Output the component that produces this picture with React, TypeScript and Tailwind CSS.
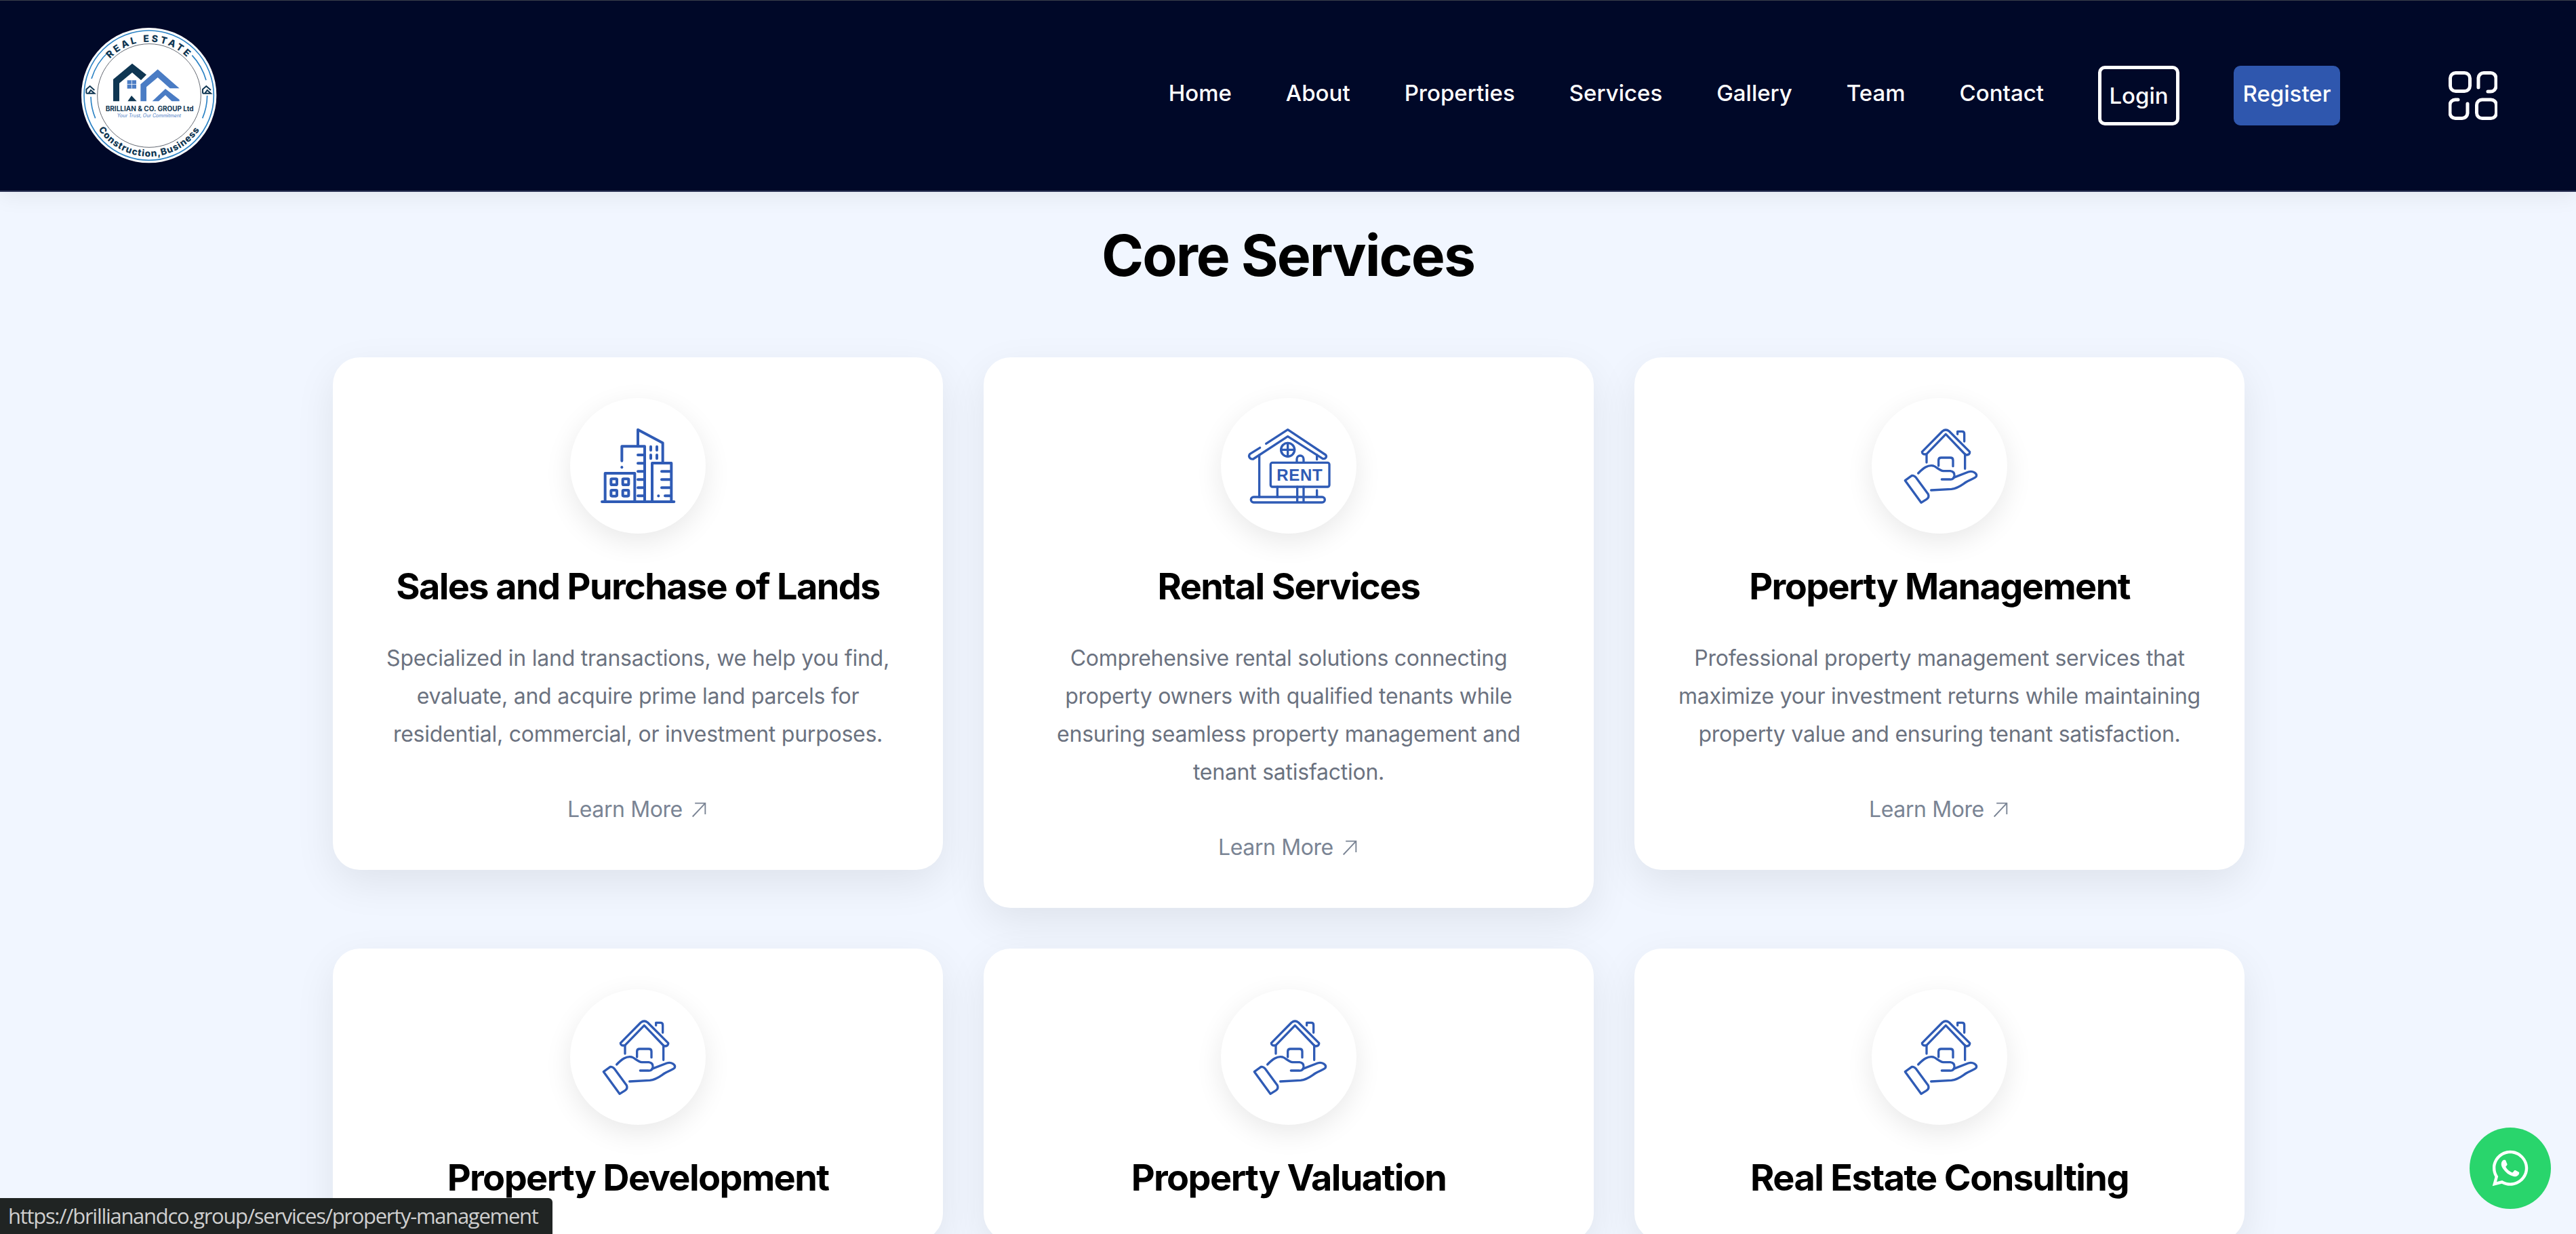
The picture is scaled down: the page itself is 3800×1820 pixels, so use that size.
import React from "react";
import { FaWhatsapp } from "react-icons/fa";

const navLinks = ["Home", "About", "Properties", "Services", "Gallery", "Team", "Contact"];

const Logo = () => (
  <svg viewBox="0 0 600 600" className="w-[200px] h-[200px] shrink-0">
    <defs>
      <path id="logoTop" d="M62 300 A238 238 0 0 1 538 300" />
      <path id="logoBottom" d="M30 300 A270 270 0 0 0 570 300" />
    </defs>
    <circle cx="299" cy="299" r="299" fill="#ffffff" />
    <circle cx="299" cy="299" r="287" fill="none" stroke="#2b82c4" strokeWidth="5" />
    <path d="M45 225 A265 265 0 0 1 122 105" fill="none" stroke="#2b82c4" strokeWidth="5" />
    <path d="M490 122 A265 265 0 0 1 552 232" fill="none" stroke="#2b82c4" strokeWidth="5" />
    <path d="M42 305 A262 262 0 0 0 62 400" fill="none" stroke="#2b82c4" strokeWidth="5" />
    <path d="M557 300 A262 262 0 0 1 536 400" fill="none" stroke="#2b82c4" strokeWidth="5" />
    <circle cx="300" cy="300" r="229" fill="none" stroke="#444a55" strokeWidth="2.5" />
    <text fill="#0f3652" fontSize="42" fontWeight="800" fontFamily="Inter, sans-serif" letterSpacing="10">
      <textPath href="#logoTop" startOffset="50%" textAnchor="middle">REAL ESTATE</textPath>
    </text>
    <text fill="#0f3652" fontSize="41" fontWeight="800" fontFamily="Inter, sans-serif" letterSpacing="3">
      <textPath href="#logoBottom" startOffset="50%" textAnchor="middle">Construction,Business</textPath>
    </text>
    <path d="M22 290 V272 L38 258 L58 276 M22 290 H58 L42 276 L32 290" fill="none" stroke="#0f3652" strokeWidth="6" />
    <path d="M537 290 V272 L553 258 L573 276 M537 290 H573 L557 276 L547 290" fill="none" stroke="#0f3652" strokeWidth="6" />
    <path d="M141 325 V228 L225 158 L288 208 L264 232 L225 198 L168 245 V325 H205 L222 300 L245 325 Z" fill="#0f3652" />
    <rect x="203" y="232" width="40" height="37" fill="#4a7cc4" />
    <path d="M223 232 V269 M203 250 H243" stroke="#ffffff" strokeWidth="2.5" />
    <path d="M262 250 L338 184 L434 268 H392 L338 220 L288 262 V325 H262 Z" fill="#4a7cc4" />
    <path d="M314 325 L372 270 L434 318 V325 H400 L372 298 L342 325 Z" fill="#4a7cc4" />
    <text x="302" y="368" textAnchor="middle" fill="#0f3652" fontSize="30" fontWeight="700" fontFamily="Inter, sans-serif">BRILLIAN &amp; CO. GROUP Ltd</text>
    <text x="300" y="397" textAnchor="middle" fill="#4a7cc4" fontSize="21" fontStyle="italic" fontFamily="Inter, sans-serif">Your Trust, Our Commitment</text>
  </svg>
);

const MenuIcon = () => (
  <svg viewBox="0 0 72 72" fill="none" stroke="#ffffff" strokeWidth="5" strokeLinecap="round" className="w-[72px] h-[72px]">
    <rect x="2.5" y="2.5" width="29" height="27" rx="8" />
    <path d="M44 24 V10 a8 8 0 0 1 8 -7.500 h10 a8 8 0 0 1 8 7.500 V22 a8 8 0 0 1 -8 8 h-4" />
    <path d="M28 48 V62 a8 8 0 0 1 -8 7.500 h-10 a8 8 0 0 1 -8 -7.500 V50 a8 8 0 0 1 8 -8 h4" />
    <rect x="41.500" y="42" width="29" height="27.500" rx="8" />
  </svg>
);

const BuildingsIcon = () => (
  <svg viewBox="62 20 600 600" fill="none" stroke="#2f5bb5" strokeWidth="12" strokeLinecap="round" strokeLinejoin="round" className="w-full h-full">
    <path d="M203 479 H522" />
    <path d="M217 479 V353 H348 V479" />
    <rect x="243" y="378" width="26" height="26" rx="4" />
    <rect x="295" y="378" width="26" height="26" rx="4" />
    <rect x="243" y="428" width="26" height="26" rx="4" />
    <rect x="295" y="428" width="26" height="26" rx="4" />
    <path d="M291 298 V234 H392 V479" />
    <path d="M291 326 V326.500" />
    <path d="M362 272 H392 M362 309 H392 M362 345 H392 M362 381 H392 M362 417 H392 M362 453 H392" />
    <path d="M362 234 V160 L472 219 V305" />
    <path d="M419 235 V251 M446 235 V251 M419 272 V288 M446 272 V288" />
    <path d="M425 479 V308 H510 V479" />
    <path d="M467 345 H505 M467 381 H505 M467 417 H505 M482 453 H505" />
    <path d="M453 453 V453.500" />
  </svg>
);

const RentIcon = () => (
  <svg viewBox="62 20 600 600" fill="none" stroke="#2f5bb5" strokeWidth="10" strokeLinecap="round" strokeLinejoin="round" className="w-full h-full">
    <path d="M262 222 L358 160 L526 272 C532 280 525 292 512 288 L358 190 L205 290 C190 292 182 278 190 268 L235 240" />
    <path d="M232 272 V458 M487 272 V292 M487 428 V458" />
    <circle cx="358" cy="249" r="30" />
    <path d="M358 219 V279 M328 249 H388" />
    <path d="M398 305 V290 a15 15 0 0 1 30 0 V305" />
    <rect x="282" y="306" width="260" height="107" rx="8" />
    <path d="M312 413 V458 M400 413 V480 M428 413 V480" />
    <rect x="195" y="458" width="327" height="24" rx="12" />
    <text x="411" y="386" textAnchor="middle" fill="#2f5bb5" stroke="none" fontSize="72" fontWeight="700" letterSpacing="2" fontFamily="'Liberation Sans', sans-serif">RENT</text>
  </svg>
);

const HandHouseIcon = () => (
  <svg viewBox="62 20 600 600" fill="none" stroke="#2f5bb5" strokeWidth="10" strokeLinecap="round" strokeLinejoin="round" className="w-full h-full">
    <path d="M305 268 L390 180 L478 272 Q498 272 496 258 L405 167 Q390 155 375 167 L285 258 Q285 272 305 268" />
    <path d="M305 268 V305 M475 268 V333" />
    <path d="M442 180 V168 H462 Q472 168 472 178 V212" />
    <path d="M358 320 V295 Q358 284 370 284 H410 Q422 284 422 295 V322" />
    <path d="M268 353 C290 330 310 315 335 320 C350 325 360 340 380 343 H410 Q430 345 428 365 Q425 382 408 380 H372" />
    <path d="M425 372 L490 347 C510 340 530 355 525 367 C520 375 500 380 480 392 C460 405 445 420 415 423 L325 428" />
    <path d="M210 385 L240 363 Q250 362 258 372 L312 445 Q318 460 305 468 L281 483 Z" />
  </svg>
);

const services = [
  {
    title: "Sales and Purchase of Lands",
    icon: <BuildingsIcon />,
    lines: [
      "Specialized in land transactions, we help you find,",
      "evaluate, and acquire prime land parcels for",
      "residential, commercial, or investment purposes.",
    ],
  },
  {
    title: "Rental Services",
    icon: <RentIcon />,
    lines: [
      "Comprehensive rental solutions connecting",
      "property owners with qualified tenants while",
      "ensuring seamless property management and",
      "tenant satisfaction.",
    ],
  },
  {
    title: "Property Management",
    icon: <HandHouseIcon />,
    lines: [
      "Professional property management services that",
      "maximize your investment returns while maintaining",
      "property value and ensuring tenant satisfaction.",
    ],
  },
  { title: "Property Development", icon: <HandHouseIcon />, lines: [] },
  { title: "Property Valuation", icon: <HandHouseIcon />, lines: [] },
  { title: "Real Estate Consulting", icon: <HandHouseIcon />, lines: [] },
];

const App = () => {
  return (
    <div className="relative h-screen overflow-hidden bg-[#f1f6ff] font-['Inter',sans-serif]">
      <header className="flex items-center justify-between h-[283px] pl-[120px] pr-[116px] bg-[#000828] border-t border-[#3a3f4a] border-b-2 border-b-[#2c3355] shadow-[0_8px_30px_rgba(0,0,0,0.06)]">
        <Logo />
        <nav className="flex items-center text-white text-[33px] font-medium">
          <div className="flex items-center gap-[80px]">
            {navLinks.map((link) => (
              <a key={link} className="-mt-[6px]">{link}</a>
            ))}
            <button className="flex items-center justify-center w-[120px] h-[88px] border-[5px] border-white rounded-[10px] pt-[2px]">Login</button>
            <button className="flex items-center justify-center w-[157px] h-[88px] bg-[#2f57ae] rounded-[10px] pb-[5px]">Register</button>
          </div>
          <div className="ml-[160px]"><MenuIcon /></div>
        </nav>
      </header>

      <main className="pt-[54px]">
        <h2 className="text-center text-[84px] leading-[80px] font-bold text-black tracking-[-2px]">Core Services</h2>
        <div className="grid grid-cols-3 gap-[60px] items-start w-[2820px] ml-[491px] mt-[110px]">
          {services.map((service) => (
            <div key={service.title} className="flex flex-col items-center bg-white rounded-[40px] pt-[60px] pb-[61px] shadow-[0_20px_60px_rgba(0,0,0,0.08)]">
              <div className="w-[200px] h-[200px] rounded-full bg-white shadow-[0_12px_40px_rgba(0,0,0,0.09)]">{service.icon}</div>
              <h3 className="mt-[46px] text-[54px] leading-[64px] font-bold text-black tracking-[-1.6px]">{service.title}</h3>
              {service.lines.length > 0 && (
                <>
                  <p className="mt-[46px] text-center text-[32px] leading-[56px] text-[#6b7280] whitespace-nowrap tracking-[-0.25px]">
                    {service.lines.map((line) => (
                      <span key={line} className="block">{line}</span>
                    ))}
                  </p>
                  <a className="flex items-center gap-[10px] mt-[55px] text-[32px] leading-[56px] text-[#7a8494] tracking-[-0.4px]">
                    Learn More
                    <svg viewBox="0 0 24 24" fill="none" stroke="currentColor" strokeWidth="1.600" className="w-[28px] h-[28px]">
                      <path d="M4 21 L20 4 M7 4 H20 V18" />
                    </svg>
                  </a>
                </>
              )}
            </div>
          ))}
        </div>
      </main>

      <a className="absolute right-[37px] bottom-[37px] flex items-center justify-center w-[120px] h-[120px] rounded-full bg-[#29d56c] text-white">
        <FaWhatsapp className="w-[60px] h-[60px]" />
      </a>
      <div className="absolute left-0 bottom-0 flex items-center h-[53px] w-[815px] pl-[12px] bg-[#202423] rounded-tr-[6px] text-[31px] text-[#cfcfcf] font-['Open_Sans',sans-serif] tracking-[-1.3px]">
        https://brillianandco.group/services/property-management
      </div>
    </div>
  );
};

export default App;
